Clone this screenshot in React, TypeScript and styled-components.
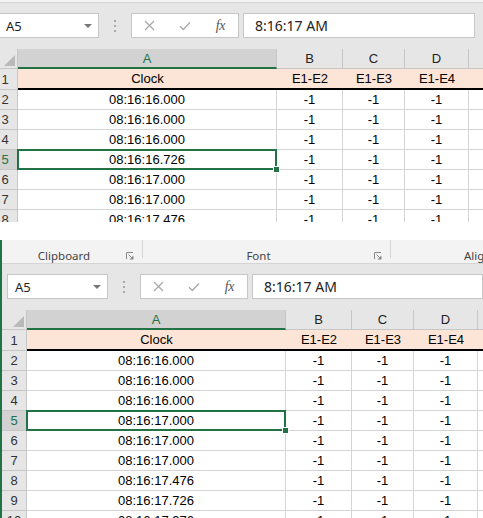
import React from 'react';
import styled, { createGlobalStyle } from 'styled-components';

const GREEN = '#217346';
const HEADER_BG = '#e6e6e6';
const HEADER_SEL = '#d2d2d2';
const HEADER_LINE = '#c6c6c6';
const GRID_LINE = '#d4d4d4';

const GlobalStyle = createGlobalStyle`
  html, body {
    margin: 0;
    padding: 0;
    background: #fff;
  }
  body {
    width: 483px;
    height: 518px;
    overflow: hidden;
    font-family: "Liberation Sans", Arial, sans-serif;
  }
`;

const Page = styled.div`
  display: flex;
  flex-direction: column;
  gap: 18px;
  width: 483px;
`;

// crops one screenshot of the Excel window
const Viewport = styled.div<{ $height: number }>`
  height: ${p => p.$height}px;
  overflow: hidden;
`;

const Window = styled.div<{ $shiftX: number; $edge: boolean }>`
  box-sizing: border-box;
  width: ${p => 483 - p.$shiftX}px;
  margin-left: ${p => p.$shiftX}px;
  border-left: ${p => (p.$edge ? `2px solid ${GREEN}` : 'none')};
  display: flex;
  flex-direction: column;
`;

/* ---------- ribbon group labels ---------- */

const Ribbon = styled.div<{ $height: number }>`
  display: flex;
  height: ${p => p.$height}px;
  overflow: hidden;
  background: #f3f3f3;
  border-bottom: 1px solid #d5d5d5;
`;

const Group = styled.div<{ $width?: number }>`
  display: flex;
  align-items: flex-start;
  ${p => (p.$width ? `width: ${p.$width}px; flex: none;` : 'flex: 1; min-width: 0;')}
`;

const GroupBody = styled.div<{ $indent?: number; $end?: boolean }>`
  flex: 1;
  min-width: 0;
  height: 100%;
  box-sizing: border-box;
  display: flex;
  align-items: center;
  padding: 8px ${p => (p.$end ? 0 : 8)}px 0 ${p => p.$indent ?? 0}px;
`;

const GroupLabel = styled.span<{ $left?: boolean }>`
  flex: 1;
  text-align: ${p => (p.$left ? 'left' : 'center')};
  font-family: "Noto Sans", "Open Sans", sans-serif;
  font-size: 11.5px;
  color: #444;
  white-space: nowrap;
  overflow: hidden;
`;

const Separator = styled.div`
  flex: none;
  width: 1px;
  height: 18px;
  background: #d5d5d5;
`;

const Launcher = () => (
  <svg width="8" height="8" viewBox="0 0 8 8">
    <path d="M0.5 7V0.5H7" fill="none" stroke="#8a8a8a" strokeWidth="1" />
    <path d="M2.5 2.5L6 6" stroke="#8a8a8a" strokeWidth="1" />
    <path d="M7.5 3.5V7.5H3.5Z" fill="#8a8a8a" />
  </svg>
);

/* ---------- formula bar ---------- */

const FormulaRow = styled.div`
  display: flex;
  align-items: flex-start;
  height: 46px;
  box-sizing: border-box;
  padding: 10px 0 0 5px;
  background: ${HEADER_BG};
`;

const NameBox = styled.div`
  flex: none;
  width: 101px;
  height: 25px;
  box-sizing: border-box;
  display: flex;
  align-items: center;
  justify-content: space-between;
  padding: 0 6px 0 7px;
  background: #fff;
  border: 1px solid ${HEADER_LINE};
  font-family: "Noto Sans", "Open Sans", sans-serif;
  font-size: 13px;
  color: #222;
`;

const DropArrow = styled.span`
  width: 0;
  height: 0;
  border-left: 4px solid transparent;
  border-right: 4px solid transparent;
  border-top: 4px solid #777;
`;

const Grip = styled.div`
  flex: none;
  width: 32px;
  height: 25px;
  display: flex;
  flex-direction: column;
  align-items: center;
  justify-content: center;
  gap: 3px;
`;

const GripDot = styled.span`
  width: 2px;
  height: 2px;
  background: #a9a9a9;
`;

const ButtonBox = styled.div`
  flex: none;
  width: 108px;
  height: 25px;
  box-sizing: border-box;
  display: flex;
  background: #fff;
  border: 1px solid ${HEADER_LINE};
`;

const BarButton = styled.span`
  flex: 1;
  display: flex;
  align-items: center;
  justify-content: center;
`;

const Fx = styled.span`
  font-family: "Liberation Serif", "DejaVu Serif", serif;
  font-style: italic;
  font-size: 14px;
  color: #555;
  letter-spacing: -0.5px;
`;

const FormulaInput = styled.div<{ $inset: number }>`
  flex: 1;
  height: 25px;
  box-sizing: border-box;
  margin: 0 ${p => p.$inset}px 0 4px;
  padding-left: 11px;
  display: flex;
  align-items: center;
  background: #fff;
  border: 1px solid ${HEADER_LINE};
  font-family: "Noto Sans", "Open Sans", sans-serif;
  font-size: 14px;
  color: #222;
`;

const CancelIcon = () => (
  <svg width="11" height="11" viewBox="0 0 11 11">
    <path d="M1 1L10 10M10 1L1 10" stroke="#a8a8a8" strokeWidth="1.2" />
  </svg>
);

const CheckIcon = () => (
  <svg width="12" height="10" viewBox="0 0 12 10">
    <path d="M1 5.2L4.3 8.5L11 1.5" fill="none" stroke="#a8a8a8" strokeWidth="1.3" />
  </svg>
);

/* ---------- sheet grid ---------- */

const Grid = styled.div`
  display: grid;
  grid-template-columns: 25px 259px 66px 62px 64px 1fr;
  font-size: 13px;
`;

const Corner = styled.div`
  height: 20px;
  box-sizing: border-box;
  display: flex;
  align-items: flex-end;
  justify-content: flex-end;
  padding: 0 2px 2px 0;
  background: ${HEADER_BG};
  border-right: 1px solid ${HEADER_LINE};
  border-bottom: 1px solid ${HEADER_LINE};
`;

const ColHeader = styled.div<{ $selected?: boolean; $last?: boolean }>`
  height: 20px;
  box-sizing: border-box;
  display: flex;
  align-items: center;
  justify-content: center;
  background: ${p => (p.$selected ? HEADER_SEL : HEADER_BG)};
  color: ${p => (p.$selected ? GREEN : '#222')};
  border-right: ${p => (p.$last ? 'none' : `1px solid ${HEADER_LINE}`)};
  border-bottom: ${p => (p.$selected ? `2px solid ${GREEN}` : `1px solid ${HEADER_LINE}`)};
`;

const RowHeader = styled.div<{ $selected?: boolean; $tall?: boolean }>`
  height: ${p => (p.$tall ? 21 : 20)}px;
  box-sizing: border-box;
  display: flex;
  align-items: center;
  justify-content: center;
  background: ${p => (p.$selected ? HEADER_SEL : HEADER_BG)};
  color: ${p => (p.$selected ? GREEN : '#333')};
  border-right: 1px solid ${HEADER_LINE};
  border-bottom: 1px solid ${HEADER_LINE};
`;

const Cell = styled.div<{ $title?: boolean; $last?: boolean; $selected?: boolean }>`
  position: relative;
  height: ${p => (p.$title ? 21 : 20)}px;
  box-sizing: border-box;
  display: flex;
  align-items: center;
  justify-content: center;
  white-space: nowrap;
  color: #000;
  background: ${p => (p.$title ? '#fce4d6' : '#fff')};
  border-right: ${p => (p.$title || p.$last ? 'none' : `1px solid ${GRID_LINE}`)};
  border-bottom: ${p => (p.$title ? '2px solid #000' : `1px solid ${GRID_LINE}`)};

  ${p =>
    p.$selected &&
    `
    &::after {
      content: '';
      position: absolute;
      top: -1px;
      left: -1px;
      right: -1px;
      bottom: -1px;
      border: 2px solid ${GREEN};
      z-index: 1;
    }
  `}
`;

const FillHandle = styled.span`
  position: absolute;
  right: -4px;
  bottom: -4px;
  width: 5px;
  height: 5px;
  background: ${GREEN};
  border: 1px solid #fff;
  z-index: 2;
`;

const columns = ['A', 'B', 'C', 'D'];
const titles = ['Clock', 'E1-E2', 'E1-E3', 'E1-E4'];

type WindowProps = {
  clocks: string[];
  shiftX: number;
  edge: boolean;
  inset: number;
  showRibbon: boolean;
};

const ExcelWindow: React.FC<WindowProps> = ({ clocks, shiftX, edge, inset, showRibbon }) => (
  <Window $shiftX={shiftX} $edge={edge}>
    <Ribbon $height={showRibbon ? 23 : 2}>
      {showRibbon && (
        <>
          <Group $width={141}>
            <GroupBody>
              <GroupLabel>Clipboard</GroupLabel>
              <Launcher />
            </GroupBody>
            <Separator />
          </Group>
          <Group $width={248}>
            <GroupBody>
              <GroupLabel>Font</GroupLabel>
              <Launcher />
            </GroupBody>
            <Separator />
          </Group>
          <Group>
            <GroupBody $indent={73} $end>
              <GroupLabel $left>Alignment</GroupLabel>
            </GroupBody>
          </Group>
        </>
      )}
    </Ribbon>

    <FormulaRow>
      <NameBox>
        A5
        <DropArrow />
      </NameBox>
      <Grip>
        <GripDot />
        <GripDot />
        <GripDot />
      </Grip>
      <ButtonBox>
        <BarButton><CancelIcon /></BarButton>
        <BarButton><CheckIcon /></BarButton>
        <BarButton><Fx>fx</Fx></BarButton>
      </ButtonBox>
      <FormulaInput $inset={inset}>8:16:17 AM</FormulaInput>
    </FormulaRow>

    <Grid>
      <Corner>
        <svg width="11" height="11" viewBox="0 0 11 11">
          <polygon points="11,0 11,11 0,11" fill="#b9b9b9" />
        </svg>
      </Corner>
      {columns.map(c => (
        <ColHeader key={c} $selected={c === 'A'}>{c}</ColHeader>
      ))}
      <ColHeader $last />

      <RowHeader $tall>1</RowHeader>
      {titles.map(t => (
        <Cell key={t} $title>{t}</Cell>
      ))}
      <Cell $title $last />

      {clocks.map((clock, i) => {
        const row = i + 2;
        const selected = row === 5;
        return (
          <React.Fragment key={row}>
            <RowHeader $selected={selected}>{row}</RowHeader>
            <Cell $selected={selected}>
              {clock}
              {selected && <FillHandle />}
            </Cell>
            <Cell>-1</Cell>
            <Cell>-1</Cell>
            <Cell>-1</Cell>
            <Cell $last />
          </React.Fragment>
        );
      })}
    </Grid>
  </Window>
);

const firstShot = [
  '08:16:16.000',
  '08:16:16.000',
  '08:16:16.000',
  '08:16:16.726',
  '08:16:17.000',
  '08:16:17.000',
  '08:16:17.476',
];

const secondShot = [
  '08:16:16.000',
  '08:16:16.000',
  '08:16:16.000',
  '08:16:17.000',
  '08:16:17.000',
  '08:16:17.000',
  '08:16:17.476',
  '08:16:17.726',
  '08:16:17.976',
];

export default function App() {
  return (
    <>
      <GlobalStyle />
      <Page>
        <Viewport $height={222}>
          <ExcelWindow clocks={firstShot} shiftX={-7} edge={false} inset={8} showRibbon={false} />
        </Viewport>
        <Viewport $height={278}>
          <ExcelWindow clocks={secondShot} shiftX={0} edge inset={0} showRibbon />
        </Viewport>
      </Page>
    </>
  );
}
